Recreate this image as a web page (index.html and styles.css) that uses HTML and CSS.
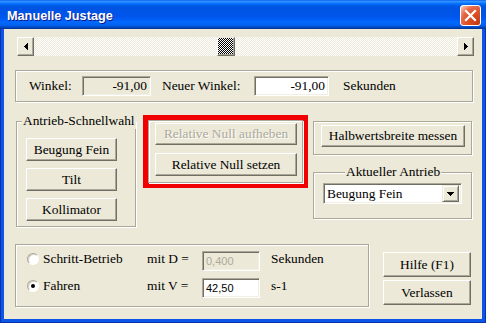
FILE: index.html
```html
<!DOCTYPE html>
<html lang="de">
<head>
    <meta charset="UTF-8">
    <title>Manuelle Justage</title>
    <link rel="stylesheet" href="styles.css">
</head>
<body>
    <div class="window">
        <div class="titlebar">
            <span class="title">Manuelle Justage</span>
            <span class="close">
                <svg width="19" height="19" viewBox="0 0 19 19"><path d="M5 5L14 14M14 5L5 14" stroke="#fff" stroke-width="2.2" stroke-linecap="square"/></svg>
            </span>
        </div>
        <div class="client">
            <div class="scrollbar">
                <div class="sb-btn">
                    <svg width="4" height="7" shape-rendering="crispEdges"><path d="M3 0h1v7h-1zM2 1h1v5h-1zM1 2h1v3h-1zM0 3h1v1h-1z"/></svg>
                </div>
                <div class="sb-track"><div class="sb-thumb"></div></div>
                <div class="sb-btn">
                    <svg width="4" height="7" shape-rendering="crispEdges"><path d="M0 0h1v7h-1zM1 1h1v5h-1zM2 2h1v3h-1zM3 3h1v1h-1z"/></svg>
                </div>
            </div>

            <div class="group angle">
                <span class="lbl lbl-winkel">Winkel:</span>
                <span class="field readonly w-cur">-91,00</span>
                <span class="lbl lbl-neu">Neuer Winkel:</span>
                <span class="field w-new">-91,00</span>
                <span class="lbl lbl-sek">Sekunden</span>
            </div>

            <div class="middle">
                <div class="group quick">
                    <span class="legend">Antrieb-Schnellwahl</span>
                    <button class="btn">Beugung Fein</button>
                    <button class="btn">Tilt</button>
                    <button class="btn">Kollimator</button>
                </div>

                <div class="highlight">
                    <div class="group relnull">
                        <button class="btn" disabled>Relative Null aufheben</button>
                        <button class="btn">Relative Null setzen</button>
                    </div>
                </div>

                <div class="right-col">
                    <div class="group fwhm">
                        <button class="btn">Halbwertsbreite messen</button>
                    </div>
                    <div class="group drive">
                        <span class="legend legend-drive">Aktueller Antrieb</span>
                        <div class="combo">
                            <span class="combo-text">Beugung Fein</span>
                            <span class="combo-btn">
                                <svg width="7" height="4" shape-rendering="crispEdges"><path d="M0 0h7v1H0zM1 1h5v1H1zM2 2h3v1H2zM3 3h1v1H3z"/></svg>
                            </span>
                        </div>
                    </div>
                </div>
            </div>

            <div class="bottom">
                <div class="group mode">
                    <label class="opt"><span class="radio"></span>Schritt-Betrieb</label>
                    <span class="opt-lbl">mit D =</span>
                    <span class="field small disabled">0,400</span>
                    <span class="unit">Sekunden</span>

                    <label class="opt"><span class="radio on"></span>Fahren</label>
                    <span class="opt-lbl">mit V =</span>
                    <span class="field small">42,50</span>
                    <span class="unit">s-1</span>
                </div>
                <div class="actions">
                    <button class="btn">Hilfe (F1)</button>
                    <button class="btn">Verlassen</button>
                </div>
            </div>
        </div>
    </div>
</body>
</html>
```

FILE: styles.css
```css
* {
    box-sizing: border-box;
}

html, body {
    margin: 0;
    padding: 0;
}

body {
    width: 486px;
    height: 323px;
    overflow: hidden;
    background: #fff;
    font-family: "Liberation Serif", "DejaVu Serif", serif;
    font-size: 13.4px;
    color: #000;
}

.window {
    width: 486px;
    height: 323px;
    display: flex;
    flex-direction: column;
    background: #0b55e8;
    box-shadow: inset 1px 0 #0831a8, inset -1px 0 #0831a8, inset 0 -1px #0831a8;
}

/* title bar */
.titlebar {
    height: 29px;
    flex: none;
    display: flex;
    align-items: center;
    justify-content: space-between;
    padding: 0 5px 0 7px;
    background: linear-gradient(to bottom, #0058ee 0%, #3a93ff 4%, #288eff 7%, #127dff 10%, #036ffc 13%, #0262ee 17%, #0057e5 22%, #0054e3 30%, #0055eb 56%, #005bf5 66%, #026afe 76%, #0062ef 86%, #0052d6 92%, #0040ab 96%, #003092 100%);
}

.title {
    padding-top: 3px;
    font-family: "Liberation Sans", Arial, sans-serif;
    font-weight: bold;
    font-size: 12.7px;
    color: #fff;
    text-shadow: 1px 1px #0f1a8a;
}

.close {
    width: 21px;
    height: 21px;
    margin-top: 2px;
    display: flex;
    align-items: center;
    justify-content: center;
    border: 1px solid #fff;
    border-radius: 3px;
    background: radial-gradient(circle at 90% 90%, #c43a10 0%, #e0532c 50%, #e66b4a 70%, #f6b8a4 92%, #fff 100%);
}

/* client area */
.client {
    flex: 1;
    margin: 0 4px 4px 4px;
    background: #ece9d8;
    display: flex;
    flex-direction: column;
}

.scrollbar {
    display: flex;
    width: 457px;
    height: 19px;
    margin: 8px 0 0 13px;
}

.sb-btn {
    width: 17px;
    height: 19px;
    display: flex;
    align-items: center;
    justify-content: center;
    background: #ece9d8;
    border: 1px solid;
    border-color: #fff #716f64 #716f64 #fff;
    box-shadow: inset -1px -1px #aca899;
}

.sb-track {
    flex: 1;
    background: repeating-conic-gradient(#fff 0 25%, #ece9d8 0 50%) 0 0 / 2px 2px;
}

.sb-thumb {
    width: 18px;
    height: 19px;
    margin-left: 183px;
    background: repeating-conic-gradient(#000 0 25%, #fff 0 50%) 0 0 / 2px 2px;
    border: 1px solid;
    border-color: #ece9d8 #716f64 #716f64 #fff;
    box-shadow: inset -1px -1px #aca899;
}

/* etched group box */
.group {
    position: relative;
    border: 1px solid #aca899;
    box-shadow: inset 1px 1px #fff, 1px 1px #fff;
}

.legend {
    position: absolute;
    top: -9px;
    left: 5px;
    padding: 0 1px;
    line-height: 16px;
    background: #ece9d8;
    white-space: nowrap;
}

.btn {
    font-family: inherit;
    font-size: inherit;
    color: #000;
    padding: 0;
    background: #ece9d8;
    border: 1px solid;
    border-color: #fff #716f64 #716f64 #fff;
    box-shadow: inset -1px -1px #aca899;
}

.btn:disabled {
    color: #aca899;
    text-shadow: 1px 1px #fff;
}

.field {
    height: 20px;
    display: flex;
    align-items: center;
    justify-content: flex-end;
    padding: 0 3px;
    background: #fff;
    border: 1px solid;
    border-color: #aca899 #fff #fff #aca899;
    box-shadow: inset 1px 1px #716f64, inset -1px -1px #f1efe2;
    white-space: nowrap;
}

.field.readonly {
    background: #ece9d8;
}

/* angle row */
.angle {
    width: 458px;
    height: 32px;
    margin: 14px 0 0 11px;
    padding-left: 13px;
    display: flex;
    align-items: center;
}

.lbl {
    white-space: nowrap;
}

.lbl-winkel {
    width: 53px;
}

.w-cur {
    width: 69px;
}

.lbl-neu {
    width: 92px;
    margin-left: 11px;
}

.w-new {
    width: 75px;
}

.lbl-sek {
    margin-left: 14px;
}

/* middle section */
.middle {
    display: flex;
    align-items: flex-start;
    margin-top: 13px;
}

.quick {
    width: 120px;
    height: 106px;
    margin: 6px 0 0 12px;
    padding: 16px 0 0 9px;
    display: flex;
    flex-direction: column;
    gap: 7px;
}

.quick .btn {
    width: 91px;
    height: 23px;
}

.highlight {
    width: 165px;
    height: 73px;
    margin-left: 7px;
    border: 5px solid #f00000;
}

.relnull {
    height: 100%;
    padding: 2px 0 0 6px;
    display: flex;
    flex-direction: column;
    gap: 8px;
}

.relnull .btn {
    width: 142px;
    height: 22px;
}

.relnull .btn + .btn {
    height: 23px;
}

.right-col {
    width: 159px;
    margin: 6px 0 0 5px;
    display: flex;
    flex-direction: column;
}

.fwhm {
    height: 34px;
    padding: 3px 0 0 7px;
}

.fwhm .btn {
    width: 144px;
    height: 22px;
}

.drive {
    height: 47px;
    margin-top: 17px;
    padding: 10px 0 0 9px;
}

.legend-drive {
    left: 31px;
}

.combo {
    width: 139px;
    height: 21px;
    display: flex;
    align-items: center;
    background: #fff;
    border: 1px solid;
    border-color: #aca899 #fff #fff #aca899;
    box-shadow: inset 1px 1px #716f64, inset -1px -1px #f1efe2;
    padding: 2px;
}

.combo-text {
    flex: 1;
    padding-left: 1px;
}

.combo-btn {
    width: 17px;
    height: 17px;
    display: flex;
    align-items: center;
    justify-content: center;
    background: #ece9d8;
    border: 1px solid;
    border-color: #ece9d8 #716f64 #716f64 #ece9d8;
    box-shadow: inset 1px 1px #fff, inset -1px -1px #aca899;
}

/* bottom section */
.bottom {
    display: flex;
    align-items: flex-start;
    margin-top: 17px;
}

.mode {
    width: 354px;
    height: 63px;
    margin-left: 11px;
    padding: 6px 0 0 11px;
    display: grid;
    grid-template-columns: 120px 55px 58px auto;
    grid-template-rows: 20px 20px;
    row-gap: 7px;
}

.opt, .opt-lbl, .unit {
    align-self: start;
    line-height: 15px;
    white-space: nowrap;
}

.opt {
    display: flex;
    align-items: center;
    gap: 4px;
}

.unit {
    padding-left: 11px;
}

.radio {
    width: 12px;
    height: 12px;
    display: flex;
    align-items: center;
    justify-content: center;
    border-radius: 50%;
    background: #fff;
    border: 1px solid;
    border-color: #aca899 #fff #fff #aca899;
    box-shadow: inset 1px 1px #d4d0c8;
}

.radio.on::after {
    content: "";
    width: 4px;
    height: 4px;
    border-radius: 50%;
    background: #000;
}

.field.small {
    justify-content: flex-start;
    font-family: "Liberation Sans", Arial, sans-serif;
    font-size: 11px;
}

.field.disabled {
    background: #ece9d8;
    color: #aca899;
}

.actions {
    margin: 8px 0 0 14px;
    display: flex;
    flex-direction: column;
    gap: 3px;
}

.actions .btn {
    width: 88px;
    height: 25px;
}
```
